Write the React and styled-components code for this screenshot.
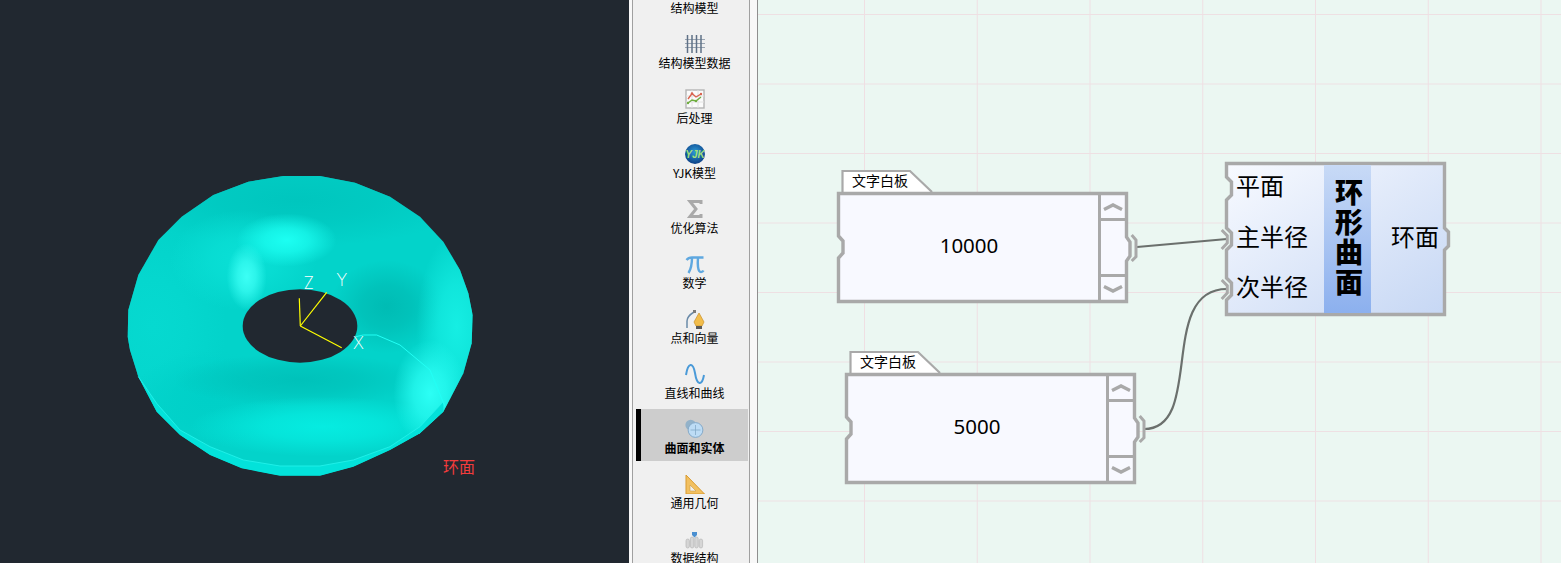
import React from "react";
import styled, { createGlobalStyle } from "styled-components";

const GlobalStyle = createGlobalStyle`
  html, body {
    margin: 0;
    height: 100%;
    overflow: hidden;
    background: #f8f8f8;
  }
  #root {
    height: 100%;
  }
`;

const Page = styled.div`
  display: flex;
  height: 563px;
  overflow: hidden;
  font-family: "Noto Sans CJK SC", "Noto Sans", sans-serif;
  color: #000;
`;

/* ---------- 3d viewport ---------- */

const Viewport = styled.div`
  position: relative;
  flex: none;
  width: 629px;
  height: 100%;
  background: #212830;
`;

const ViewportSvg = styled.svg`
  display: block;
`;

const AxisLetter = styled.text`
  font-family: Inter, "Liberation Sans", sans-serif;
  font-size: 17px;
  font-weight: 200;
  fill: #fff;
  text-anchor: middle;
`;

const ObjectLabel = styled.span`
  position: absolute;
  left: 443px;
  top: 455px;
  font-size: 16px;
  line-height: 22px;
  color: #f23c3c;
`;

const outline =
  "520,48 630,48 735,68 840,110 930,170 1000,245 1050,330 1075,400 1088,465 1085,550 1060,640 1000,755 930,820 840,870 730,920 630,947 510,947 395,925 300,885 210,825 140,755 85,650 60,570 53,530 55,450 85,345 145,240 215,170 310,105 415,65";

const glows = [
  { cx: 560, cy: 120, rx: 520, ry: 140, fill: "#00c6be" },
  { cx: 130, cy: 500, rx: 220, ry: 300, fill: "#06d9d0" },
  { cx: 300, cy: 720, rx: 240, ry: 150, fill: "#00d0c8" },
  { cx: 400, cy: 300, rx: 220, ry: 150, fill: "#0ae0d6" },
  { cx: 530, cy: 240, rx: 150, ry: 80, fill: "#1cfff2" },
  { cx: 410, cy: 350, rx: 60, ry: 100, fill: "#3cfff5" },
  { cx: 830, cy: 440, rx: 170, ry: 140, fill: "#00bcb4" },
  { cx: 570, cy: 660, rx: 380, ry: 80, fill: "#00c2ba" },
  { cx: 640, cy: 800, rx: 400, ry: 90, fill: "#06ece1" },
  { cx: 1040, cy: 500, rx: 120, ry: 280, fill: "#16eee3" },
  { cx: 960, cy: 700, rx: 110, ry: 160, fill: "#2cfff5" },
];

const Torus = () => (
  <ViewportSvg width="629" height="563" viewBox="0 0 629 563">
    <defs>
      <clipPath id="torusClip">
        <polygon points={outline} />
      </clipPath>
      {glows.map((g, i) => (
        <radialGradient key={i} id={`glow${i}`}>
          <stop offset="0%" stopColor={g.fill} stopOpacity="1" />
          <stop offset="45%" stopColor={g.fill} stopOpacity="0.7" />
          <stop offset="100%" stopColor={g.fill} stopOpacity="0" />
        </radialGradient>
      ))}
    </defs>
    <g transform="translate(110 160) scale(0.33333)">
      <polygon points={outline} fill="#03d3ca" />
      <g clipPath="url(#torusClip)">
        {glows.map((g, i) => (
          <ellipse key={i} cx={g.cx} cy={g.cy} rx={g.rx} ry={g.ry} fill={`url(#glow${i})`} />
        ))}
        <polygon
          points="85,650 140,730 210,810 300,860 400,900 510,918 630,918 730,900 840,860 930,800 1000,725 1000,755 930,820 840,870 730,920 630,947 510,947 395,925 300,885 210,825 140,755"
          fill="#03e2da"
        />
      </g>
      <polyline
        points="85,650 140,730 210,810 300,860 400,900 510,918 630,918 730,900 840,860 930,800 1000,725"
        fill="none"
        stroke="#25f3ec"
        strokeWidth="2.5"
      />
      <polyline
        points="738,530 760,525 800,525 870,555 960,630 1005,740"
        fill="none"
        stroke="#22fff5"
        strokeWidth="3"
      />
      <ellipse cx="570" cy="498" rx="172" ry="110" fill="#212830" />
    </g>
    <g stroke="#ffff00" strokeWidth="1.2">
      <line x1="300.3" y1="326" x2="299.3" y2="298.3" />
      <line x1="300.3" y1="326" x2="326.7" y2="292.3" />
      <line x1="300.3" y1="326" x2="341.7" y2="347.7" />
    </g>
    <AxisLetter x="308.7" y="289">Z</AxisLetter>
    <AxisLetter x="341.7" y="285.5">Y</AxisLetter>
    <AxisLetter x="358.5" y="348.5">X</AxisLetter>
  </ViewportSvg>
);

/* ---------- toolbox icons ---------- */

const GridIcon = () => (
  <svg width="20" height="20" viewBox="0 0 20 20" fill="none">
    <g stroke="#9aa5b2" strokeWidth="1.2">
      <path d="M0 5.5H20M0 9.5H20M0 13.5H20" />
    </g>
    <g stroke="#5f7186" strokeWidth="1.5">
      <path d="M2.5 1V19M7 1V19M11.5 1V19M16 1V19" />
    </g>
  </svg>
);

const ChartIcon = () => (
  <svg width="20" height="20" viewBox="0 0 20 20" fill="none">
    <rect x="1" y="1" width="18" height="18" fill="#fbfbfb" stroke="#b4b4b4" strokeWidth="1.4" />
    <path d="M1 7H19M1 13H19M7 1V19M13 1V19" stroke="#e2e2e2" />
    <polyline points="3,10 7,4.5 11,8 16,5" stroke="#d9634f" strokeWidth="1.4" />
    <polyline points="3,14 7,11 11,12 16,8" stroke="#6fae3f" strokeWidth="1.4" />
    <g fill="#d9634f">
      <circle cx="7" cy="4.5" r="1.2" />
      <circle cx="16" cy="5" r="1.2" />
    </g>
    <g fill="#6fae3f">
      <circle cx="3" cy="14" r="1.2" />
      <circle cx="11" cy="12" r="1.2" />
    </g>
  </svg>
);

const LogoText = styled.text`
  font-family: "Liberation Sans", sans-serif;
  font-size: 10px;
  font-weight: 700;
  font-style: italic;
  fill: #a4e07a;
  text-anchor: middle;
`;

const YjkIcon = () => (
  <svg width="20" height="20" viewBox="0 0 20 20">
    <defs>
      <radialGradient id="yjkBall" cx="50%" cy="40%" r="60%">
        <stop offset="0%" stopColor="#2c9ad6" />
        <stop offset="100%" stopColor="#0c3f86" />
      </radialGradient>
    </defs>
    <circle cx="10" cy="10" r="10" fill="url(#yjkBall)" />
    <LogoText x="10" y="13.5">YJK</LogoText>
  </svg>
);

const SigmaIcon = () => (
  <svg width="20" height="20" viewBox="0 0 20 20" fill="none">
    <polyline
      points="16,5 16,2.5 5,2.5 11,10 5,17.5 16,17.5 16,15"
      stroke="#a9a9a9"
      strokeWidth="3"
    />
  </svg>
);

const PiIcon = () => (
  <svg width="20" height="20" viewBox="0 0 20 20" fill="none" stroke="#5fa8e0" strokeWidth="2.4">
    <path d="M1.5 6C3 4 5 3.5 7 3.5H18.5" />
    <path d="M7 3.5C7 9 6 15 3.5 19" />
    <path d="M13 3.5C12.5 9 12.5 18 16 18C17 18 18 17.5 18.5 16.5" />
  </svg>
);

const PenIcon = () => (
  <svg width="20" height="20" viewBox="0 0 20 20" fill="none">
    <path d="M2 19V12C2 8.5 5 5.5 9 3" stroke="#6a8aa8" strokeWidth="1.5" />
    <rect x="8" y="1" width="3" height="3" fill="#7a7a7a" />
    <polygon points="14,4 19,13 17,17 11,17 9,13" fill="#f2bd4b" stroke="#c8902a" strokeWidth="0.7" />
    <rect x="11" y="17" width="6" height="3" fill="#5a5a5a" />
  </svg>
);

const WaveIcon = () => (
  <svg width="20" height="20" viewBox="0 0 20 20" fill="none">
    <path d="M1 11C3 -2 8 -2 10 9C12 22 17 22 19 11" stroke="#4a9ad8" strokeWidth="2" />
  </svg>
);

const SolidIcon = () => (
  <svg width="20" height="20" viewBox="0 0 20 20">
    <circle cx="5.7" cy="6" r="5.3" fill="#93b2c9" />
    <circle cx="10.5" cy="11" r="7.4" fill="#bddcf5" stroke="#84a9c8" />
    <path d="M10.5 6V16M5.5 11H15.5" stroke="#84a9c8" strokeWidth="0.8" />
  </svg>
);

const RulerIcon = () => (
  <svg width="20" height="20" viewBox="0 0 20 20">
    <polygon points="1,1 19.5,20 1,20" fill="#f2c060" stroke="#d89a30" />
    <polygon points="5,11 11,17 5,17" fill="#f0f0f0" stroke="#c99a45" strokeWidth="0.6" />
  </svg>
);

const DataIcon = () => (
  <svg width="20" height="20" viewBox="0 0 20 20">
    <g fill="#d6d6d6" stroke="#b0b0b0" strokeWidth="0.6">
      <rect x="1" y="10" width="3.4" height="9" rx="1.7" />
      <rect x="5.4" y="8" width="3.4" height="11" rx="1.7" />
      <rect x="9.8" y="8" width="3.4" height="11" rx="1.7" />
      <rect x="14.2" y="10" width="3.4" height="9" rx="1.7" />
    </g>
    <path d="M7 3H12V6L9.5 8.5L7 6Z" fill="#4a8fd0" />
  </svg>
);

const tools = [
  { label: "结构模型" },
  { label: "结构模型数据", Icon: GridIcon },
  { label: "后处理", Icon: ChartIcon },
  { label: "YJK模型", Icon: YjkIcon },
  { label: "优化算法", Icon: SigmaIcon },
  { label: "数学", Icon: PiIcon },
  { label: "点和向量", Icon: PenIcon },
  { label: "直线和曲线", Icon: WaveIcon },
  { label: "曲面和实体", Icon: SolidIcon, active: true },
  { label: "通用几何", Icon: RulerIcon },
  { label: "数据结构", Icon: DataIcon },
];

/* ---------- toolbox ---------- */

const ToolFrame = styled.div`
  flex: none;
  width: 128px;
  height: 100%;
  box-sizing: border-box;
  padding: 0 7px 0 3px;
  background: #f8f8f8;
`;

const Toolbox = styled.div`
  height: 100%;
  box-sizing: border-box;
  padding: 0 1px 0 3px;
  border-left: 1px solid #a0a0a0;
  border-right: 1px solid #a0a0a0;
  background: #f0f0f0;
  overflow: hidden;
`;

const ToolList = styled.div`
  display: flex;
  flex-direction: column;
  row-gap: 3px;
  margin-top: -31px;
`;

const ToolItem = styled.div`
  flex: none;
  display: flex;
  flex-direction: column;
  align-items: center;
  height: 52px;
  box-sizing: border-box;
  padding-top: 10px;
  border-left: 5px solid ${(p) => (p.$active ? "#000" : "transparent")};
  background: ${(p) => (p.$active ? "#cdcdcd" : "transparent")};
`;

const ToolIcon = styled.div`
  width: 20px;
  height: 20px;
  margin-left: 1px;
  svg {
    display: block;
  }
`;

const ToolLabel = styled.div`
  margin-top: 1px;
  font-size: 12px;
  line-height: 16px;
  font-weight: ${(p) => (p.$active ? 700 : 400)};
  white-space: nowrap;
`;

/* ---------- node canvas ---------- */

const Canvas = styled.div`
  position: relative;
  flex: 1;
  height: 100%;
  overflow: hidden;
  border-left: 1px solid #8f8f8f;
  background-color: #ebf7f2;
  background-image:
    linear-gradient(to right, #efdfe3 1px, transparent 1px),
    linear-gradient(to bottom, #eee0e3 1px, transparent 1px);
  background-size: 112.75px 69.5px;
  background-position: 106px 14px;
`;

const WireLayer = styled.svg`
  position: absolute;
  left: 0;
  top: 0;
`;

const NotePanel = styled.div`
  position: absolute;
  left: ${(p) => p.$x}px;
  top: ${(p) => p.$y}px;
  width: 291px;
`;

const NoteTab = styled.div`
  position: relative;
  height: 22px;
  box-sizing: border-box;
  padding-left: 15px;
  font-size: 14px;
  line-height: 20px;
`;

const Shape = styled.svg`
  position: absolute;
  left: 0;
  top: 0;
  overflow: visible;
`;

const TabText = styled.span`
  position: relative;
`;

const NoteBody = styled.div`
  position: relative;
  display: flex;
  height: 111px;
`;

const NoteValue = styled.div`
  position: relative;
  flex: 1;
  display: flex;
  align-items: center;
  justify-content: center;
  padding: 0 0 5px 3px;
  font-family: "Noto Sans", sans-serif;
  font-size: 20.5px;
`;

const ScrollColumn = styled.div`
  position: relative;
  flex: none;
  display: flex;
  flex-direction: column;
  width: 30px;
  box-sizing: border-box;
  padding: 3px 3px 3px 0;
  border-left: 3px solid #a9a9a9;
`;

const ScrollButton = styled.div`
  flex: none;
  display: flex;
  align-items: center;
  justify-content: center;
  height: 23px;
  border-top: ${(p) => (p.$down ? "3px solid #a9a9a9" : "none")};
  border-bottom: ${(p) => (p.$down ? "none" : "3px solid #a9a9a9")};
  color: #a9a9a9;
`;

const ScrollTrack = styled.div`
  flex: 1;
`;

const Chevron = ({ down }) => (
  <svg width="20" height="8" viewBox="0 0 20 8" fill="none" stroke="currentColor" strokeWidth="3.4">
    <polyline points={down ? "1,1.5 10,6 19,1.5" : "1,6.5 10,2 19,6.5"} />
  </svg>
);

const NoteShape = () => (
  <Shape width="291" height="111" fill="none">
    <path
      d="M1.5 1.5H289.5V45L293 50V64L289.5 69V109.5H1.5V66L6 61V49L1.5 44Z"
      fill="#f8f9ff"
      stroke="#a9a9a9"
      strokeWidth="3.4"
    />
    <polyline points="294.7,43 299,48 299,64.7 294.7,69" stroke="#a9a9a9" strokeWidth="3" />
  </Shape>
);

const TabShape = () => (
  <Shape width="96" height="22" fill="none">
    <path d="M5.5 22V1H73L95 22" fill="#fff" stroke="#a9a9a9" strokeWidth="2.2" />
  </Shape>
);

const Note = ({ x, y, value }) => (
  <NotePanel $x={x} $y={y}>
    <NoteTab>
      <TabShape />
      <TabText>文字白板</TabText>
    </NoteTab>
    <NoteBody>
      <NoteShape />
      <NoteValue>{value}</NoteValue>
      <ScrollColumn>
        <ScrollButton>
          <Chevron />
        </ScrollButton>
        <ScrollTrack />
        <ScrollButton $down>
          <Chevron down />
        </ScrollButton>
      </ScrollColumn>
    </NoteBody>
  </NotePanel>
);

const ComponentNode = styled.div`
  position: absolute;
  left: 467px;
  top: 162px;
  display: flex;
  width: 221px;
  height: 154px;
`;

const PortColumn = styled.div`
  position: relative;
  flex: none;
  width: 99px;
  display: flex;
  flex-direction: column;
  box-sizing: border-box;
  padding-left: 11px;
`;

const PortLabel = styled.div`
  height: 50.5px;
  font-size: 24px;
  line-height: 46px;
  white-space: nowrap;
`;

const TitleBand = styled.div`
  position: relative;
  flex: none;
  width: 47px;
  margin: 3px 0;
  padding: 0 0 1px 2px;
  box-sizing: border-box;
  display: flex;
  align-items: center;
  justify-content: center;
  background: linear-gradient(to bottom, #c8daf6, #8cb0ee);
`;

const TitleText = styled.div`
  writing-mode: vertical-rl;
  text-orientation: upright;
  font-size: 28px;
  font-weight: 900;
  letter-spacing: 2.2px;
  line-height: 45px;
`;

const OutputColumn = styled.div`
  position: relative;
  flex: 1;
  box-sizing: border-box;
  padding: 50.5px 7px 0 0;
  text-align: right;
`;

const NodeShape = () => (
  <Shape width="221" height="154" fill="none">
    <defs>
      <linearGradient id="nodeFill" x1="0" y1="0" x2="1" y2="1">
        <stop offset="0%" stopColor="#f8faff" />
        <stop offset="100%" stopColor="#c6d7f4" />
      </linearGradient>
    </defs>
    <path
      d="M1.5 1.5H219.5V66L223.5 70V84L219.5 88V152.5H1.5V138L6.5 133V121L1.5 116V88L6.5 83V71L1.5 66V38L6.5 33V20L1.5 15Z"
      fill="url(#nodeFill)"
      stroke="#a9a9a9"
      strokeWidth="3.4"
    />
    <g stroke="#a9a9a9" strokeWidth="3">
      <polyline points="-3.3,68 2.3,73.7 2.3,81 -3.3,87" />
      <polyline points="-3.3,118 2.3,123.7 2.3,131 -3.3,137" />
    </g>
  </Shape>
);

export default function App() {
  return (
    <Page>
      <GlobalStyle />
      <Viewport>
        <Torus />
        <ObjectLabel>环面</ObjectLabel>
      </Viewport>
      <ToolFrame>
        <Toolbox>
          <ToolList>
            {tools.map(({ label, Icon, active }) => (
              <ToolItem key={label} $active={active}>
                <ToolIcon>{Icon && <Icon />}</ToolIcon>
                <ToolLabel $active={active}>{label}</ToolLabel>
              </ToolItem>
            ))}
          </ToolList>
        </Toolbox>
      </ToolFrame>
      <Canvas>
        <WireLayer width="803" height="563" viewBox="758 0 803 563" fill="none">
          <g stroke="#6b706d" strokeWidth="2.2">
            <path d="M1137 247L1227 239" />
            <path d="M1144 429C1205 429 1157 289 1227 289" />
          </g>
        </WireLayer>
        <Note x={79} y={170} value="10000" />
        <Note x={87} y={351} value="5000" />
        <ComponentNode>
          <NodeShape />
          <PortColumn>
            <PortLabel>平面</PortLabel>
            <PortLabel>主半径</PortLabel>
            <PortLabel>次半径</PortLabel>
          </PortColumn>
          <TitleBand>
            <TitleText>环形曲面</TitleText>
          </TitleBand>
          <OutputColumn>
            <PortLabel>环面</PortLabel>
          </OutputColumn>
        </ComponentNode>
      </Canvas>
    </Page>
  );
}
